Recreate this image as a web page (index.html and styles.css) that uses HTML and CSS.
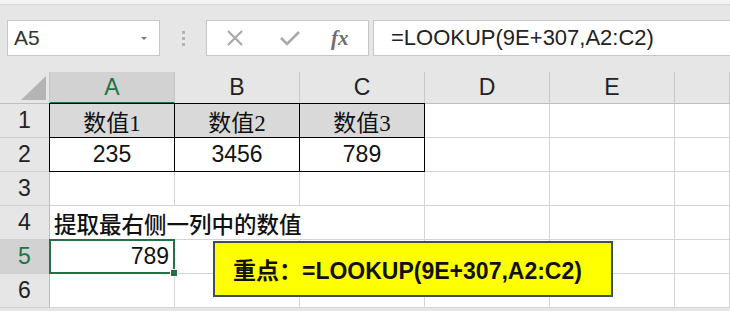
FILE: index.html
```html
<!DOCTYPE html>
<html lang="zh">

    <head>
        <meta charset="UTF-8">
        <title>LOOKUP</title>
        <link rel="stylesheet" href="styles.css">
    </head>

    <body>
        <div class="topstrip"></div>
        <div class="formula-row">
            <div class="namebox">
                <span>A5</span>
                <span class="caret"></span>
            </div>
            <div class="grip"><i></i><i></i><i></i></div>
            <div class="buttons">
                <svg width="20" height="20" viewBox="0 0 20 20"><path d="M3 3L17 17M17 3L3 17" stroke="#a8a8a8" stroke-width="2.2" fill="none"/></svg>
                <svg width="22" height="20" viewBox="0 0 22 20"><path d="M2 10L8 16L20 4" stroke="#a8a8a8" stroke-width="2.6" fill="none"/></svg>
                <span class="fx">fx</span>
            </div>
            <div class="formula">=LOOKUP(9E+307,A2:C2)</div>
        </div>

        <div class="sheet">
            <div class="corner"><span></span></div>
            <div class="colhead active">A</div>
            <div class="colhead">B</div>
            <div class="colhead">C</div>
            <div class="colhead">D</div>
            <div class="colhead">E</div>
            <div class="colhead"></div>

            <div class="rowhead">1</div>
            <div class="cell title bt bl">数值1</div>
            <div class="cell title bt">数值2</div>
            <div class="cell title bt">数值3</div>
            <div class="cell"></div>
            <div class="cell"></div>
            <div class="cell"></div>

            <div class="rowhead">2</div>
            <div class="cell num bl">235</div>
            <div class="cell num">3456</div>
            <div class="cell num">789</div>
            <div class="cell"></div>
            <div class="cell"></div>
            <div class="cell"></div>

            <div class="rowhead">3</div>
            <div class="cell"></div>
            <div class="cell"></div>
            <div class="cell"></div>
            <div class="cell"></div>
            <div class="cell"></div>
            <div class="cell"></div>

            <div class="rowhead">4</div>
            <div class="cell note">提取最右侧一列中的数值</div>
            <div class="cell spill"></div>
            <div class="cell"></div>
            <div class="cell"></div>
            <div class="cell"></div>
            <div class="cell"></div>

            <div class="rowhead active">5</div>
            <div class="cell selected">789<span class="handle"></span></div>
            <div class="cell"></div>
            <div class="cell"></div>
            <div class="cell"></div>
            <div class="cell"></div>
            <div class="cell"></div>

            <div class="rowhead">6</div>
            <div class="cell"></div>
            <div class="cell"></div>
            <div class="cell"></div>
            <div class="cell"></div>
            <div class="cell"></div>
            <div class="cell"></div>

            <div class="callout">重点：=LOOKUP(9E+307,A2:C2)</div>
        </div>
    </body>

</html>
```

FILE: styles.css
```css
body {
    margin: 0;
    background-color: #e6e6e6;
    font-family: "Liberation Sans", Arial, sans-serif;
    overflow: hidden;
}

.topstrip {
    height: 4px;
    background-color: #f3f3f3;
    border-bottom: 1px solid #d6d6d6;
}

.formula-row {
    display: flex;
    align-items: center;
    height: 36px;
    margin-top: 15px;
    padding-left: 7px;
}

.namebox {
    width: 139px;
    height: 34px;
    background-color: #fff;
    border: 1px solid #c6c6c6;
    display: flex;
    align-items: center;
    justify-content: space-between;
    padding: 0 12px 0 0;
    font-size: 21px;
    color: #333;
}

.namebox span:first-child {
    padding-left: 6px;
}

.caret {
    width: 0;
    height: 0;
    border-left: 3px solid transparent;
    border-right: 3px solid transparent;
    border-top: 3px solid #777;
}

.grip {
    width: 46px;
    display: flex;
    flex-direction: column;
    align-items: center;
    gap: 3px;
}

.grip i {
    width: 3px;
    height: 3px;
    background-color: #b4b4b4;
}

.buttons {
    height: 34px;
    background-color: #fff;
    border: 1px solid #c6c6c6;
    display: flex;
    align-items: center;
    padding-left: 18px;
    gap: 34px;
    box-sizing: content-box;
    width: 143px;
}

.fx {
    font-family: "Liberation Serif", serif;
    font-style: italic;
    font-weight: bold;
    font-size: 21px;
    color: #6e6e6e;
    margin-left: -4px;
}

.formula {
    flex: 1;
    height: 34px;
    margin-left: 4px;
    background-color: #fff;
    border: 1px solid #c6c6c6;
    border-right: none;
    display: flex;
    align-items: center;
    padding-left: 17px;
    font-size: 22px;
    color: #222;
}

.sheet {
    position: relative;
    margin-top: 16px;
    display: grid;
    grid-template-columns: 50px repeat(5, 125px) 1fr;
    grid-template-rows: 32px repeat(6, 34px);
    background-color: #fff;
}

.corner {
    background-color: #e6e6e6;
    border-right: 1px solid #c8c8c8;
    border-bottom: 1px solid #bdbdbd;
    display: flex;
    align-items: flex-end;
    justify-content: flex-end;
    padding: 0 3px 3px 0;
}

.corner span {
    width: 25px;
    height: 24px;
    background-color: #b4b4b4;
    clip-path: polygon(100% 0, 100% 100%, 0 100%);
}

.colhead {
    background-color: #e6e6e6;
    border-right: 1px solid #c8c8c8;
    border-bottom: 1px solid #bdbdbd;
    display: flex;
    align-items: center;
    justify-content: center;
    font-size: 23px;
    color: #222;
}

.colhead.active {
    background-color: #d2d2d2;
    color: #217346;
    border-bottom: 2px solid #217346;
}

.rowhead {
    background-color: #e6e6e6;
    border-right: 1px solid #bdbdbd;
    border-bottom: 1px solid #cfcfcf;
    display: flex;
    align-items: center;
    justify-content: center;
    font-size: 23px;
    color: #222;
}

.rowhead.active {
    background-color: #d2d2d2;
    color: #217346;
}

.cell {
    border-right: 1px solid #d4d4d4;
    border-bottom: 1px solid #d4d4d4;
    display: flex;
    align-items: center;
    font-size: 23px;
    color: #111;
    white-space: nowrap;
}

.title {
    background-color: #d9d9d9;
    justify-content: center;
    font-family: "Liberation Serif", "Noto Sans CJK SC", serif;
    font-size: 23px;
    border-right: 1px solid #000;
    border-bottom: 1px solid #000;
}

.num {
    justify-content: center;
    border-right: 1px solid #000;
    border-bottom: 1px solid #000;
}

.bt {
    border-top: 1px solid #000;
    margin-top: -1px;
}

.bl {
    border-left: 1px solid #000;
    margin-left: -1px;
}

.note {
    overflow: visible;
    padding-left: 4px;
    font-family: "Liberation Serif", "Noto Sans CJK SC", serif;
    font-size: 22.5px;
    font-weight: 500;
    border-right-color: transparent;
}

.spill {
    border-right-color: transparent;
}

.selected {
    position: relative;
    justify-content: flex-end;
    padding-right: 4px;
    border: 2px solid #217346;
    margin: -1px 0 0 -1px;
}

.handle {
    position: absolute;
    right: -5px;
    bottom: -5px;
    width: 6px;
    height: 6px;
    background-color: #217346;
    border: 1px solid #fff;
}

.callout {
    position: absolute;
    left: 213px;
    top: 169px;
    width: 400px;
    height: 56px;
    background-color: #ffff00;
    border: 2px solid #3b4f5c;
    display: flex;
    align-items: center;
    padding-left: 18px;
    box-sizing: border-box;
    font-family: "Liberation Sans", "Noto Sans CJK SC", sans-serif;
    font-weight: bold;
    font-size: 23px;
    color: #111;
}
```
